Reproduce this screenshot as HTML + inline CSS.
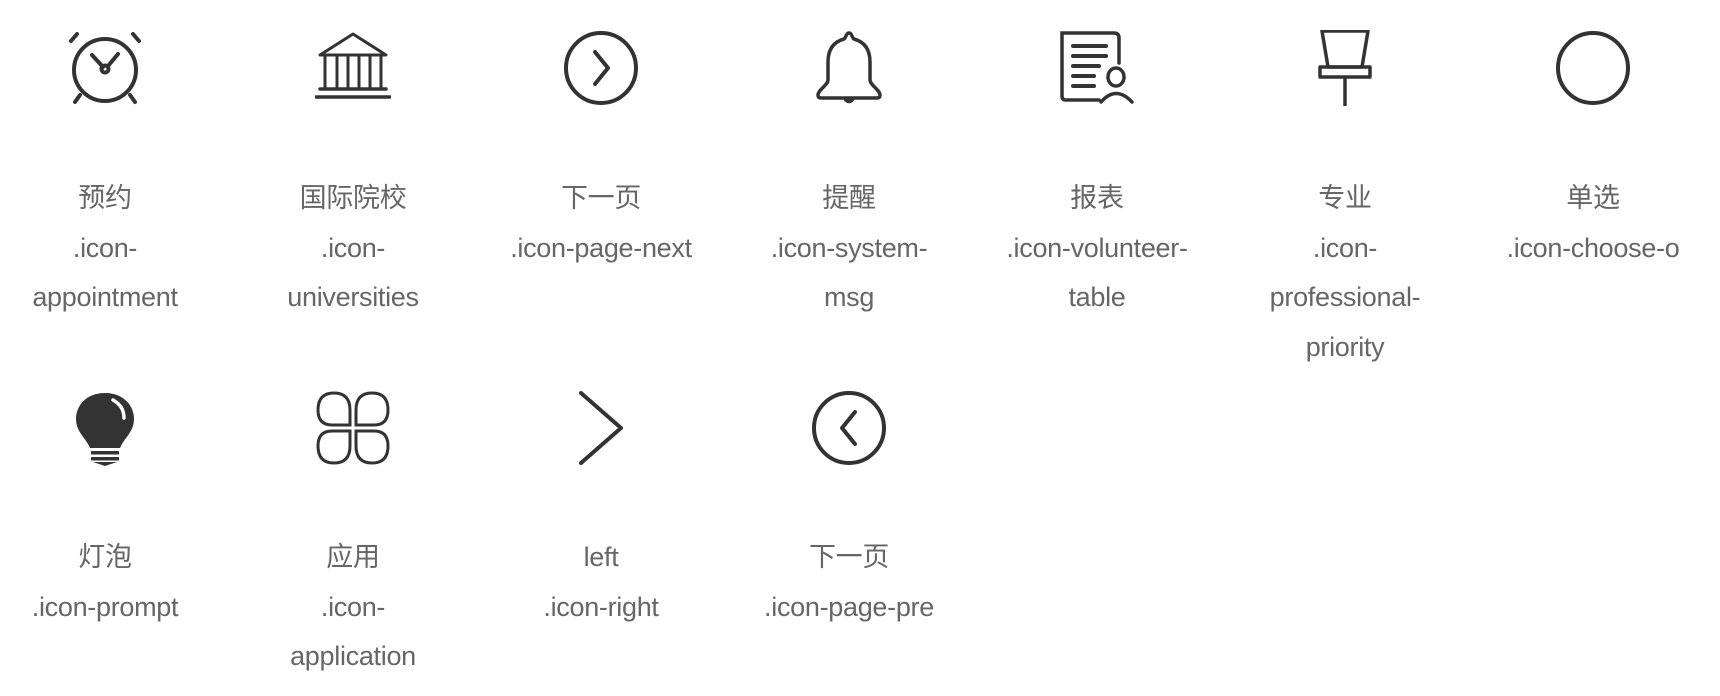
<!DOCTYPE html>
<html><head><meta charset="utf-8"><style>
html,body{margin:0;padding:0;background:#fff;width:1720px;height:696px;overflow:hidden}
.c{position:absolute;width:240px;text-align:center;font-family:"Liberation Sans","Noto Sans CJK SC",sans-serif;font-size:27px;line-height:49.6px;color:#666;letter-spacing:-0.3px}
.c svg{position:absolute;left:82px;width:76px;height:76px}
.c .t{position:absolute;left:-20px;width:280px}
</style></head><body>
<!-- row 1 -->
<div class="c" style="left:-15px;top:0">
<svg style="top:30px" viewBox="0 0 76 76" fill="none" stroke="#333" stroke-width="4" stroke-linecap="round"><circle cx="38" cy="40" r="31"/><path d="M25 25 L36 37 M51 24 L41 36"/><circle cx="38" cy="39" r="3.5"/><path d="M4 11 L10 4 M72 11 L66 4 M13 65 L8 72 M63 65 L68 72"/></svg>
<div class="t" style="top:174px">预约<br>.icon-<br>appointment</div></div>
<div class="c" style="left:233px;top:0">
<svg style="top:30px" viewBox="0 0 76 76" fill="none" stroke="#333" stroke-width="3" stroke-linecap="round"><path d="M5 25 L38 4 L71 25 Z" stroke-linejoin="round"/><path d="M10 27 V59 M22 27 V59 M33 27 V59 M44 27 V59 M55 27 V59 M66 27 V59"/><path d="M5 59 H71 M1 67 H75" stroke-width="3.5"/></svg>
<div class="t" style="top:174px">国际院校<br>.icon-<br>universities</div></div>
<div class="c" style="left:481px;top:0">
<svg style="top:30px" viewBox="0 0 76 76" fill="none" stroke="#333" stroke-width="4" stroke-linecap="round" stroke-linejoin="round"><circle cx="38" cy="38" r="35"/><path d="M32 22 L45 38 L32 54"/></svg>
<div class="t" style="top:174px">下一页<br>.icon-page-next</div></div>
<div class="c" style="left:729px;top:0">
<svg style="top:30px" viewBox="0 0 76 76" fill="none" stroke="#333" stroke-width="3.5" stroke-linejoin="round"><path d="M38 3 C35 3 35 8 33 9 C22 12 17 20 17 32 V50 C17 55 7 60 7 65 Q7 68 10 68 H66 Q69 68 69 65 C69 60 59 55 59 50 V32 C59 20 54 12 43 9 C41 8 41 3 38 3 Z"/><path d="M34 69 Q38 74 42 69" fill="#333"/></svg>
<div class="t" style="top:174px">提醒<br>.icon-system-<br>msg</div></div>
<div class="c" style="left:977px;top:0">
<svg style="top:30px" viewBox="0 0 76 76" fill="none" stroke="#333" stroke-width="3.5" stroke-linecap="round"><path d="M40 70 H7 Q3 70 3 66 V3 H55 Q60 3 60 8 V33"/><path d="M14 16 H47 M14 26 H47 M14 36 H40 M14 46 H35 M14 56 H35" stroke-width="4"/><ellipse cx="57" cy="47" rx="8" ry="9"/><path d="M42 72 Q57 55 73 72"/></svg>
<div class="t" style="top:174px">报表<br>.icon-volunteer-<br>table</div></div>
<div class="c" style="left:1225px;top:0">
<svg style="top:30px" viewBox="0 0 76 76" fill="none" stroke="#333" stroke-width="3.5" stroke-linejoin="round"><path d="M15 1 H61 L55 37 H21 Z"/><rect x="13" y="37" width="50" height="10"/><path d="M38 47 V77"/></svg>
<div class="t" style="top:174px">专业<br>.icon-<br>professional-<br>priority</div></div>
<div class="c" style="left:1473px;top:0">
<svg style="top:30px" viewBox="0 0 76 76" fill="none" stroke="#333" stroke-width="4"><circle cx="38" cy="38" r="35"/></svg>
<div class="t" style="top:174px">单选<br>.icon-choose-o</div></div>
<!-- row 2 -->
<div class="c" style="left:-15px;top:360px">
<svg style="top:30px" viewBox="0 0 76 76"><path d="M38 3 C19 3 9 16 9 29 C9 42 19 48 23 58 H53 C57 48 67 42 67 29 C67 16 57 3 38 3 Z" fill="#333"/><path d="M46 10 Q57 16 57 28" stroke="#fff" stroke-width="3.5" fill="none" stroke-linecap="round"/><rect x="24" y="61" width="28" height="3.5" fill="#333"/><rect x="24" y="67" width="28" height="3.5" fill="#333"/><path d="M26 72 H50 L38 76 Z" fill="#333"/></svg>
<div class="t" style="top:173px">灯泡<br>.icon-prompt</div></div>
<div class="c" style="left:233px;top:360px">
<svg style="top:30px" viewBox="0 0 76 76" fill="none" stroke="#333" stroke-width="3"><path d="M35 35 H17 Q3 35 3 20 Q3 3 19 3 Q35 3 35 20 Z"/><path d="M41 35 H59 Q73 35 73 20 Q73 3 57 3 Q41 3 41 20 Z"/><path d="M35 41 H17 Q3 41 3 56 Q3 73 19 73 Q35 73 35 56 Z"/><path d="M41 41 H59 Q73 41 73 56 Q73 73 57 73 Q41 73 41 56 Z"/></svg>
<div class="t" style="top:173px">应用<br>.icon-<br>application</div></div>
<div class="c" style="left:481px;top:360px">
<svg style="top:30px" viewBox="0 0 76 76" fill="none" stroke="#333" stroke-width="4" stroke-linecap="round" stroke-linejoin="round"><path d="M18 3 L58 38 L18 73"/></svg>
<div class="t" style="top:173px">left<br>.icon-right</div></div>
<div class="c" style="left:729px;top:360px">
<svg style="top:30px" viewBox="0 0 76 76" fill="none" stroke="#333" stroke-width="4" stroke-linecap="round" stroke-linejoin="round"><circle cx="38" cy="38" r="35"/><path d="M44 22 L31 38 L44 54"/></svg>
<div class="t" style="top:173px">下一页<br>.icon-page-pre</div></div>
</body></html>
